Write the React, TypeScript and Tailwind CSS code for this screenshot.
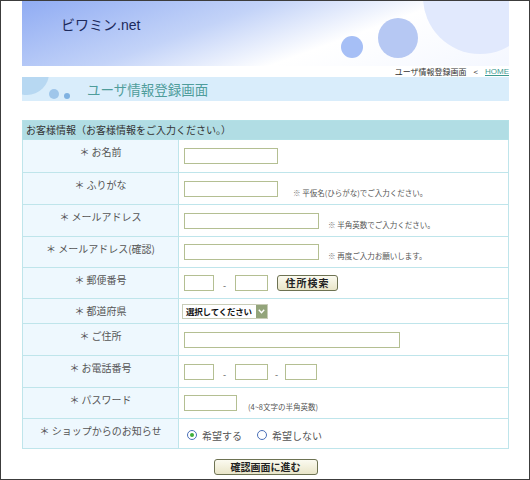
import React from "react";

const jp = "font-['Noto_Sans_CJK_JP','Noto_Sans',sans-serif]";

function Mark() {
  return <span className="font-['Noto_Sans_CJK_JP','DejaVu_Sans',sans-serif] [font-variant-emoji:text] text-[#777]">※</span>;
}

function Field({ w }: { w: string }) {
  return <input type="text" className={`h-[16px] border border-[#b4bf92] bg-white ${w}`} />;
}

function Note({ children, ml }: { children: React.ReactNode; ml: string }) {
  return <span className={`text-[7.5px] leading-[9px] text-[#555] whitespace-nowrap ${ml}`}>{children}</span>;
}

function Radio({ checked }: { checked?: boolean }) {
  return (
    <span className="w-[10px] h-[10px] rounded-full border border-[#4a6fb8] bg-white flex items-center justify-center">
      {checked && <span className="w-[4px] h-[4px] rounded-full bg-[#3fae3a]" />}
    </span>
  );
}

type Row = { label: string; h: string; body: React.ReactNode };

export default function App() {
  const rows: Row[] = [
    { label: "＊ お名前", h: "h-[33px]", body: <Field w="w-[94px]" /> },
    {
      label: "＊ ふりがな",
      h: "h-[32px]",
      body: (
        <div className="flex items-end">
          <Field w="w-[94px]" />
          <Note ml="ml-[15px]">
            <Mark /> 平仮名(ひらがな)でご入力ください。
          </Note>
        </div>
      ),
    },
    {
      label: "＊ メールアドレス",
      h: "h-[32px]",
      body: (
        <div className="flex items-end">
          <Field w="w-[135px]" />
          <Note ml="ml-[9px]">
            <Mark /> 半角英数でご入力ください。
          </Note>
        </div>
      ),
    },
    {
      label: "＊ メールアドレス(確認)",
      h: "h-[31px]",
      body: (
        <div className="flex items-end">
          <Field w="w-[135px]" />
          <Note ml="ml-[9px]">
            <Mark /> 再度ご入力お願いします。
          </Note>
        </div>
      ),
    },
    {
      label: "＊ 郵便番号",
      h: "h-[31px]",
      body: (
        <div className="flex items-center">
          <Field w="w-[30px]" />
          <span className="w-[21px] text-center text-[9px] text-[#555] pt-[6px]">-</span>
          <Field w="w-[33px]" />
          <button className="ml-[9px] w-[61px] h-[16px] rounded-[3px] border border-[#6d7252] bg-linear-to-b from-[#fbfaf0] to-[#e9e5c8] text-[10px] leading-[14px] font-bold text-[#222] tracking-[1px]">
            住所検索
          </button>
        </div>
      ),
    },
    {
      label: "＊ 都道府県",
      h: "h-[25px]",
      body: (
        <div className="ml-[-2px] w-[86px] h-[15px] border border-[#c9cdb8] bg-white flex items-center justify-between">
          <span className="pl-[3px] text-[8.5px] leading-[13px] font-semibold text-[#111] whitespace-nowrap tracking-[-0.2px]">
            選択してください
          </span>
          <span className="w-[11px] h-[13px] bg-[#93a47a] flex items-center justify-center shrink-0">
            <svg width="7" height="5" viewBox="0 0 7 5">
              <path d="M0.8 0.8 L3.5 3.8 L6.2 0.8" fill="none" stroke="#fff" strokeWidth="1.4" />
            </svg>
          </span>
        </div>
      ),
    },
    { label: "＊ ご住所", h: "h-[32px]", body: <Field w="w-[216px]" /> },
    {
      label: "＊ お電話番号",
      h: "h-[32px]",
      body: (
        <div className="flex items-center">
          <Field w="w-[30px]" />
          <span className="w-[21px] text-center text-[9px] text-[#555] pt-[6px]">-</span>
          <Field w="w-[33px]" />
          <span className="w-[17px] text-center text-[9px] text-[#555] pt-[6px]">-</span>
          <Field w="w-[32px]" />
        </div>
      ),
    },
    {
      label: "＊ パスワード",
      h: "h-[31px]",
      body: (
        <div className="flex items-end">
          <Field w="w-[53px]" />
          <Note ml="ml-[11px]">(4~8文字の半角英数)</Note>
        </div>
      ),
    },
    {
      label: "＊ ショップからのお知らせ",
      h: "h-[30px]",
      body: (
        <div className="flex items-center pt-[3px] pl-[3px] text-[10px] text-[#555]">
          <Radio checked />
          <span className="ml-[5px]">希望する</span>
          <span className="ml-[15px]">
            <Radio />
          </span>
          <span className="ml-[5px]">希望しない</span>
        </div>
      ),
    },
  ];

  return (
    <div className={`w-[530px] h-[480px] border border-[#3c3c3c] bg-white overflow-hidden ${jp}`}>
      <div className="ml-[21px] w-[487px]">
        {/* banner */}
        <div className="relative h-[65px] overflow-hidden bg-[linear-gradient(160deg,#90acf3_0%,#c3d3f8_38%,#ffffff_64%,#f4f7ff_100%)]">
          <div className="absolute left-[401px] top-[-61px] w-[114px] h-[114px] rounded-full bg-[#e1e9fd]" />
          <div className="absolute left-[319px] top-[35px] w-[22px] h-[22px] rounded-full bg-[#a6bff6]" />
          <div className="absolute left-[356px] top-[17px] w-[40px] h-[40px] rounded-full bg-[#b6c8f3]" />
          <div className="relative pl-[39px] pt-[13px] text-[14px] leading-[20px] text-[#1d2a5c]">
            ビワミン<span className="font-['Liberation_Sans',sans-serif]">.net</span>
          </div>
        </div>

        {/* breadcrumb */}
        <div className="h-[11px] flex items-center justify-end text-[8px] leading-[10px] text-[#333]">
          <span>ユーザ情報登録画面</span>
          <span className="mx-[7px]">&lt;</span>
          <a className="underline text-[#3d9a92] font-['Liberation_Sans',sans-serif] text-[8px]">HOME</a>
        </div>

        {/* title */}
        <div className="relative h-[24px] bg-[#d9edfb] overflow-hidden">
          <div className="absolute left-[-17px] top-[-26px] w-[44px] h-[44px] rounded-full bg-[#b7d8f2]" />
          <div className="absolute left-[27px] top-[12px] w-[10px] h-[10px] rounded-full bg-[#9fc6ea]" />
          <div className="absolute left-[42px] top-[16px] w-[6px] h-[6px] rounded-full bg-[#80b2e1]" />
          <div className="relative pl-[65px] text-[13.5px] leading-[24px] text-[#4f9d9b]">ユーザ情報登録画面</div>
        </div>

        {/* form table */}
        <table className="mt-[19px] w-[487px] border-collapse">
          <tbody>
            <tr className="h-[19px]">
              <td colSpan={2} className="border border-[#b3e0e6] bg-[#b1dde4] px-[3px] text-[10px] leading-[18px] text-[#333]">
                お客様情報（お客様情報をご入力ください。）
              </td>
            </tr>
            {rows.map((r) => (
              <tr key={r.label} className={r.h}>
                <td className="w-[156px] border border-[#bfe5eb] bg-[#eef8fe] align-top pt-[5px] text-center text-[10px] leading-[14px] text-[#555]">
                  {r.label}
                </td>
                <td className="border border-[#bfe5eb] pl-[5px] align-middle">{r.body}</td>
              </tr>
            ))}
          </tbody>
        </table>

        <div className="mt-[10px] flex justify-center">
          <button className="w-[104px] h-[16px] rounded-[3px] border border-[#6d7252] bg-linear-to-b from-[#fbfaf0] to-[#e9e5c8] text-[10px] leading-[14px] font-bold text-[#222]">
            確認画面に進む
          </button>
        </div>
      </div>
    </div>
  );
}
